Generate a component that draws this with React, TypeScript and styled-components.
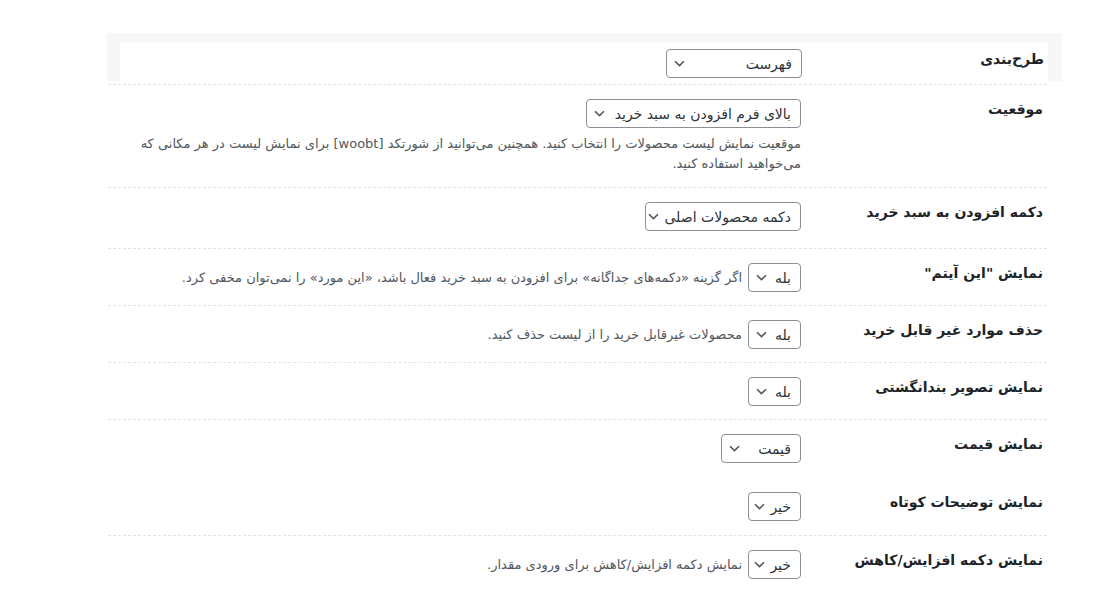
import styled, { createGlobalStyle } from "styled-components";

const GlobalStyle = createGlobalStyle`
  html, body {
    margin: 0;
    padding: 0;
    background: #ffffff;
  }
  body {
    font-family: "DejaVu Sans", "Liberation Sans", sans-serif;
    color: #1d2327;
  }
`;

const Page = styled.div`
  direction: rtl;
  padding: 33px 38px 0 107px;
`;

const HeadBand = styled.div`
  background: #f7f7f7;
  padding: 10px 14px 0 13px;
  margin-bottom: 3px;
`;

const Rows = styled.div`
  margin: 0 15px 0 1px;
`;

type RowProps = { $head?: boolean; $plain?: boolean; $extra?: number };

const Row = styled.div<RowProps>`
  display: flex;
  align-items: flex-start;
  background: #ffffff;
  padding: ${({ $head, $extra = 0 }) =>
    $head ? "5px 0 3px" : `14px 0 ${13 + $extra}px`};
  border-top: 1px dashed
    ${({ $head, $plain }) => ($head || $plain ? "transparent" : "#e3e3e3")};
`;

const Label = styled.div`
  flex: 0 0 246px;
  box-sizing: border-box;
  padding: 0 4px 0 0;
  font-size: 14px;
  font-weight: 700;
  line-height: 20px;
  color: #1d2327;
`;

const Field = styled.div`
  flex: 1;
  display: flex;
  flex-direction: column;
  align-items: flex-start;
`;

const FieldLine = styled.div`
  display: flex;
  align-items: center;
  gap: 6px;
`;

const SelectBox = styled.div<{ $width: number }>`
  width: ${({ $width }) => $width}px;
  height: 29px;
  box-sizing: border-box;
  display: flex;
  align-items: center;
  justify-content: space-between;
  gap: 5px;
  padding: 0 9px 0 7px;
  border: 1px solid #8c8f94;
  border-radius: 4px;
  background: #ffffff;
  font-size: 14px;
  color: #2c3338;
  white-space: nowrap;
`;

const Chevron = styled.svg`
  width: 11px;
  height: 7px;
  flex-shrink: 0;
`;

const Description = styled.p`
  margin: 6px 0 0;
  max-width: 672px;
  font-size: 13px;
  line-height: 20px;
  color: #50575e;
`;

const InlineNote = styled.span`
  font-size: 13px;
  color: #50575e;
  white-space: nowrap;
`;

type Setting = {
  label: string;
  value: string;
  width: number;
  note?: string;
  help?: string;
  plain?: boolean;
  extra?: number;
};

const settings: Setting[] = [
  {
    label: "موقعیت",
    value: "بالای فرم افزودن به سبد خرید",
    width: 215,
    help: "موقعیت نمایش لیست محصولات را انتخاب کنید. همچنین می‌توانید از شورتکد [woobt] برای نمایش لیست در هر مکانی که می‌خواهید استفاده کنید.",
  },
  {
    label: "دکمه افزودن به سبد خرید",
    value: "دکمه محصولات اصلی",
    width: 156,
    extra: 4,
  },
  {
    label: 'نمایش "این آیتم"',
    value: "بله",
    width: 53,
    note: "اگر گزینه «دکمه‌های جداگانه» برای افزودن به سبد خرید فعال باشد، «این مورد» را نمی‌توان مخفی کرد.",
  },
  {
    label: "حذف موارد غیر قابل خرید",
    value: "بله",
    width: 53,
    note: "محصولات غیرقابل خرید را از لیست حذف کنید.",
  },
  { label: "نمایش تصویر بندانگشتی", value: "بله", width: 53 },
  { label: "نمایش قیمت", value: "قیمت", width: 80, extra: 1 },
  { label: "نمایش توضیحات کوتاه", value: "خیر", width: 53, plain: true, extra: 1 },
  {
    label: "نمایش دکمه افزایش/کاهش",
    value: "خیر",
    width: 53,
    note: "نمایش دکمه افزایش/کاهش برای ورودی مقدار.",
  },
];

const Select = ({ value, width }: { value: string; width: number }) => (
  <SelectBox $width={width}>
    <span>{value}</span>
    <Chevron viewBox="0 0 11 7">
      <path
        d="M1 1.2 5.5 5.6 10 1.2"
        fill="none"
        stroke="#50575e"
        strokeWidth="1.6"
      />
    </Chevron>
  </SelectBox>
);

const App = () => (
  <>
    <GlobalStyle />
    <Page>
      <HeadBand>
        <Row $head>
          <Label>طرح‌بندی</Label>
          <Field>
            <Select value="فهرست" width={136} />
          </Field>
        </Row>
      </HeadBand>
      <Rows>
        {settings.map((s) => (
          <Row key={s.label} $plain={s.plain} $extra={s.extra}>
            <Label>{s.label}</Label>
            <Field>
              <FieldLine>
                <Select value={s.value} width={s.width} />
                {s.note && <InlineNote>{s.note}</InlineNote>}
              </FieldLine>
              {s.help && <Description>{s.help}</Description>}
            </Field>
          </Row>
        ))}
      </Rows>
    </Page>
  </>
);

export default App;
